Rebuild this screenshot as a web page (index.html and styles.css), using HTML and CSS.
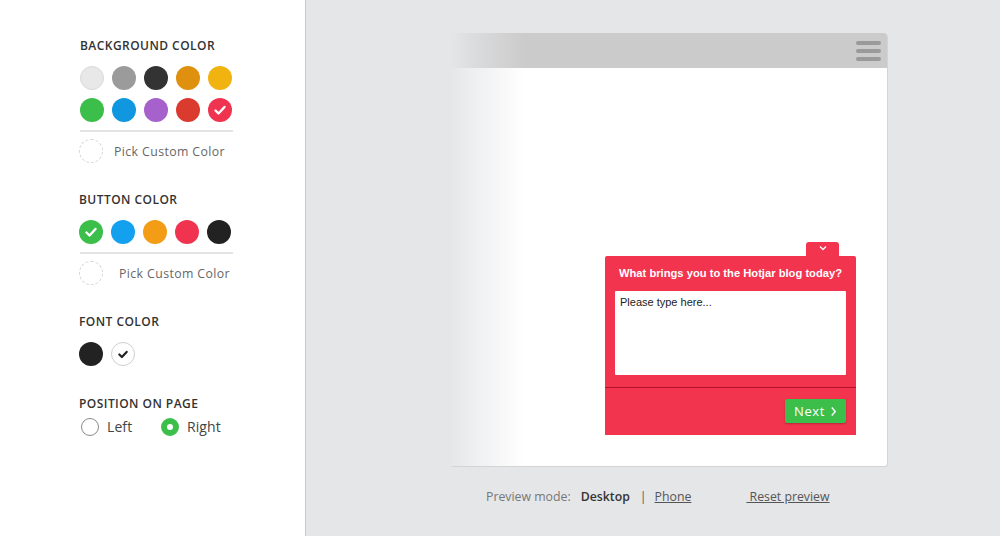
FILE: index.html
```html
<!DOCTYPE html>
<html>
<head>
<meta charset="utf-8">
<link rel="stylesheet" href="styles.css">
</head>
<body>
<aside class="sidebar">
  <section class="group">
    <h3 class="label">BACKGROUND COLOR</h3>
    <div class="swatches">
      <span class="sw light"></span>
      <span class="sw" style="background:#9b9b9b"></span>
      <span class="sw" style="background:#333333"></span>
      <span class="sw" style="background:#e0900f"></span>
      <span class="sw" style="background:#f1b310"></span>
    </div>
    <div class="swatches">
      <span class="sw" style="background:#3cbe4b"></span>
      <span class="sw" style="background:#1197df"></span>
      <span class="sw" style="background:#a661cc"></span>
      <span class="sw" style="background:#db3a2e"></span>
      <span class="sw checked" style="background:#f0344f"><svg viewBox="0 0 24 24"><path d="M7.5 12.5l3 3 6-6.5" fill="none" stroke="#fff" stroke-width="2.4" stroke-linecap="round" stroke-linejoin="round"/></svg></span>
    </div>
    <div class="divider"></div>
    <div class="custom"><span class="dashed"></span><span class="custom-text">Pick Custom Color</span></div>
  </section>

  <section class="group">
    <h3 class="label">BUTTON COLOR</h3>
    <div class="swatches">
      <span class="sw checked" style="background:#3cbe4b"><svg viewBox="0 0 24 24"><path d="M7.5 12.5l3 3 6-6.5" fill="none" stroke="#fff" stroke-width="2.4" stroke-linecap="round" stroke-linejoin="round"/></svg></span>
      <span class="sw" style="background:#13a0ef"></span>
      <span class="sw" style="background:#f39c16"></span>
      <span class="sw" style="background:#f0344f"></span>
      <span class="sw" style="background:#222222"></span>
    </div>
    <div class="divider"></div>
    <div class="custom"><span class="dashed"></span><span class="custom-text wide">Pick Custom Color</span></div>
  </section>

  <section class="group">
    <h3 class="label">FONT COLOR</h3>
    <div class="swatches">
      <span class="sw" style="background:#222222"></span>
      <span class="sw white"><svg viewBox="0 0 24 24"><path d="M8 12.5l2.8 2.8 5.2-5.6" fill="none" stroke="#222" stroke-width="2.4" stroke-linecap="round" stroke-linejoin="round"/></svg></span>
    </div>
  </section>

  <section class="group last">
    <h3 class="label">POSITION ON PAGE</h3>
    <div class="radios">
      <label class="radio"><span class="circle"></span>Left</label>
      <label class="radio"><span class="circle on"></span>Right</label>
    </div>
  </section>
</aside>

<main class="main">
  <div class="frame">
    <div class="topbar">
      <div class="burger"><i></i><i></i><i></i></div>
    </div>
    <div class="page">
      <div class="widget">
        <div class="tab"><svg viewBox="0 0 10 6"><path d="M2 1.5l3 3 3-3" fill="none" stroke="#fff" stroke-width="1.3"/></svg></div>
        <div class="title">What brings you to the Hotjar blog today?</div>
        <div class="field">Please type here...</div>
        <div class="footer">
          <button class="next">Next <svg viewBox="0 0 8 12"><path d="M2 1.5l4 4.5-4 4.5" fill="none" stroke="#fff" stroke-width="1.6"/></svg></button>
        </div>
      </div>
    </div>
    <div class="fade"></div>
  </div>
  <div class="preview">
    <span class="pm">Preview mode:</span>
    <span class="desk">Desktop</span>
    <span class="sep">|</span>
    <a class="lnk">Phone</a>
    <a class="lnk reset">&nbsp;Reset preview</a>
  </div>
</main>
</body>
</html>
```

FILE: styles.css
```css
* { box-sizing: border-box; }
html, body { margin: 0; padding: 0; }
body {
  display: flex;
  width: 1000px;
  height: 536px;
  overflow: hidden;
  font-family: "Open Sans", "Liberation Sans", sans-serif;
  color: #333;
}

.sidebar {
  width: 306px;
  flex: none;
  background: #fff;
  border-right: 1px solid #c8c8c8;
  padding: 37px 0 0 80px;
}
.group { margin-bottom: 28px; }
.group:nth-child(2) { margin-bottom: 28px; }
.group:nth-child(3) { margin-bottom: 29px; }
.label {
  margin: 0 0 12px;
  font-size: 12px;
  font-weight: 600;
  letter-spacing: 0.45px;
  color: #333;
  line-height: 17px;
}
.group:nth-child(n+2) .label { margin-left: -1px; }
.swatches { display: flex; gap: 8px; margin-bottom: 8px; }
.group:nth-child(n+2) .swatches { margin-left: -1px; }
.sw {
  width: 24px; height: 24px; border-radius: 50%;
  display: flex; align-items: center; justify-content: center;
}
.sw svg { width: 24px; height: 24px; }
.sw.light { background: #e8e8e8; border: 1px solid #d8d8d8; }
.sw.white { background: #fff; border: 1px solid #cfcfcf; }
.sw.white svg { width: 22px; height: 22px; }
.divider {
  width: 153px; height: 2px; background: #e3e3e3;
  margin-top: 1px; margin-bottom: 7px;
}
.custom { display: flex; align-items: center; height: 24px; }
.dashed {
  width: 24px; height: 24px; border-radius: 50%;
  border: 1px dashed #d6d6d6; margin-left: -1px;
}
.custom-text {
  margin-left: 11px; font-size: 12.3px; color: #666; letter-spacing: 0.4px;
}
.custom-text.wide { margin-left: 16px; }

.group.last .label { margin-bottom: 5px; }
.radios { display: flex; gap: 0; margin-left: 1px; }
.radio {
  display: flex; align-items: center; font-size: 14px; color: #444;
  letter-spacing: 0.1px;
}
.radio:first-child { width: 80px; }
.circle {
  width: 18px; height: 18px; border-radius: 50%;
  border: 1px solid #8a8a8a; margin-right: 8px; background: #fff;
}
.circle.on { border: 6px solid #3cbe4b; background: #fff; }

.main {
  flex: 1;
  background: #e5e6e8;
  padding: 33px 0 0 144px;
  display: flex;
  flex-direction: column;
}
.frame {
  position: relative;
  width: 438px;
  height: 434px;
  background: #fff;
  border-radius: 4px 4px 3px 3px;
  border-right: 1px solid #d4d4d4;
  border-bottom: 1px solid #d4d4d4;
  display: flex;
  flex-direction: column;
  overflow: hidden;
}
.topbar {
  height: 35px;
  background: #cbcbcb;
  display: flex;
  justify-content: flex-end;
  align-items: center;
  padding-right: 6px;
}
.burger { display: flex; flex-direction: column; gap: 4px; }
.burger i {
  display: block; width: 25px; height: 4px; border-radius: 2px; background: #9a9a9a;
}
.page {
  flex: 1;
  display: flex;
  justify-content: flex-end;
  align-items: flex-end;
  padding: 0 31px 31px 0;
}
.fade {
  position: absolute; left: 0; top: 0; bottom: 0; width: 75px;
  background: linear-gradient(to right, #e5e6e8 0%, rgba(229,230,232,0.6) 35%, rgba(229,230,232,0) 100%);
}
.widget {
  position: relative;
  width: 251px;
  background: #f2344e;
  border-radius: 2px 2px 0 0;
}
.tab {
  position: absolute; right: 17px; top: -14px;
  width: 33px; height: 15px;
  background: #f2344e;
  border-radius: 3px 3px 0 0;
  display: flex; justify-content: center; padding-top: 3px;
}
.tab svg { width: 10px; height: 6px; }
.title {
  font-family: "Liberation Sans", Arial, sans-serif;
  font-weight: bold; font-size: 11.2px; color: #fff;
  text-align: center; padding: 11px 0 0; line-height: 13px; height: 35px;
}
.field {
  margin: 0 10px;
  height: 84px;
  background: #fff;
  border-radius: 1px;
  font-family: "Liberation Sans", Arial, sans-serif;
  font-size: 11px; color: #222;
  padding: 5px 5px;
}
.footer {
  margin-top: 12px;
  border-top: 1px solid #b3132a;
  height: 48px;
  display: flex; justify-content: flex-end; align-items: flex-start;
  padding: 11px 10px 0 0;
}
.next {
  width: 61px; height: 24px;
  background: #3cbe4b;
  border: none; border-radius: 2px;
  box-shadow: 0 1px 2px rgba(0,0,0,0.25);
  font-family: "Open Sans", sans-serif; font-size: 13px; font-weight: 400;
  color: #fff; letter-spacing: 0.6px;
  display: flex; align-items: center; justify-content: center; gap: 5px;
  padding: 0;
}
.next svg { width: 7px; height: 11px; }

.preview {
  margin-top: 19px;
  margin-left: 36px;
  display: flex;
  align-items: center;
  font-size: 12.3px;
  height: 20px;
}
.pm { color: #777; }
.desk { color: #333; font-weight: 600; margin-left: 10px; }
.sep { color: #555; margin-left: 10px; }
.lnk { color: #555; text-decoration: underline; margin-left: 8px; }
.lnk.reset { margin-left: 55px; }
```
